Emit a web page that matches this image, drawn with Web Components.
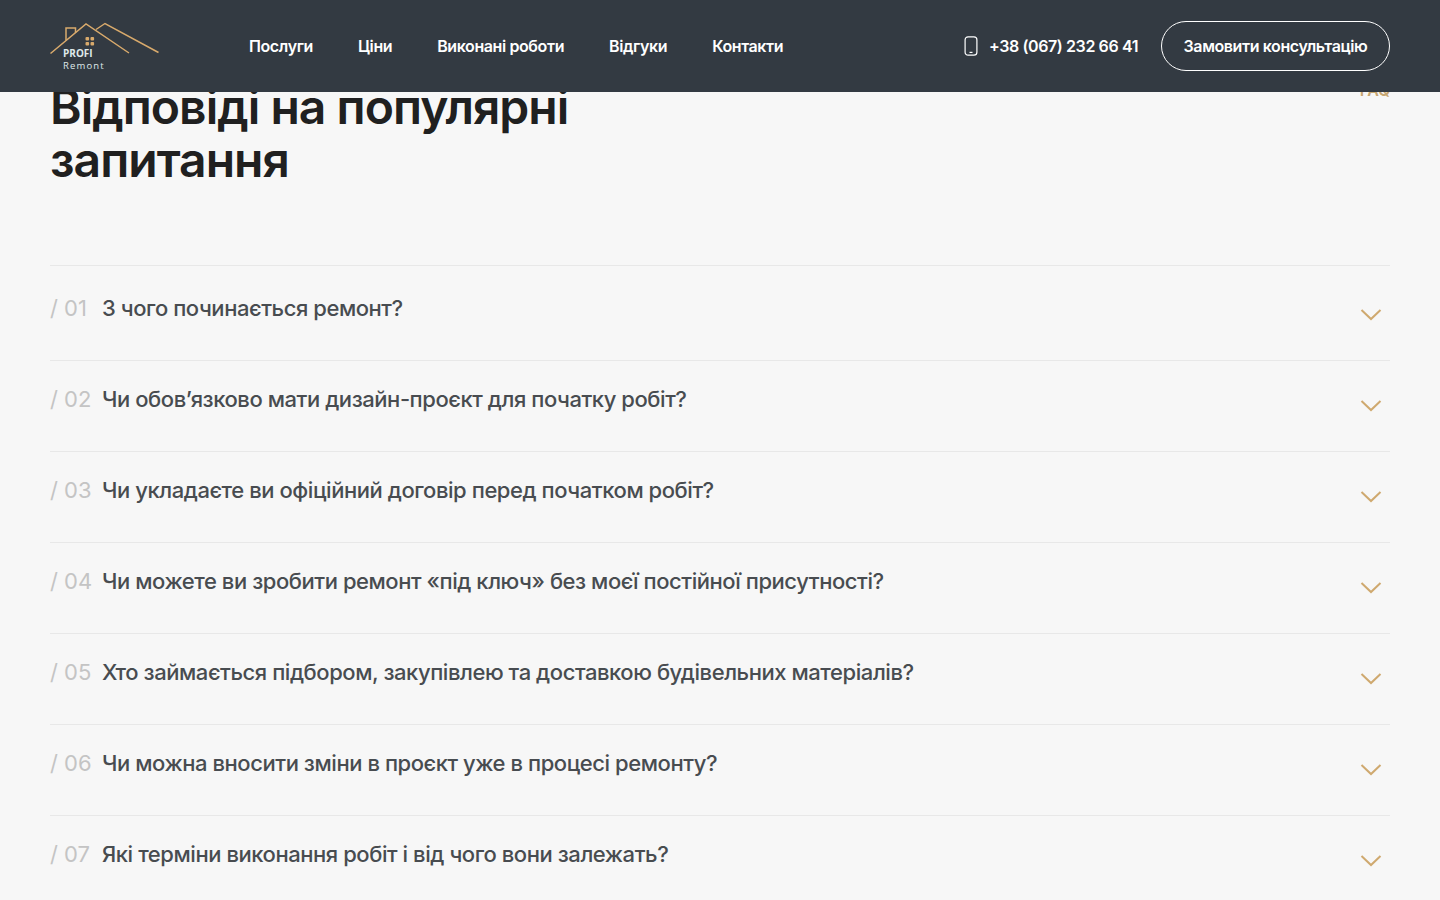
<!DOCTYPE html>
<html lang="uk">
<head>
<meta charset="utf-8">
<title>Profi Remont</title>
<style>
    html, body { margin: 0; height: 100%; overflow: hidden; background: #f7f7f7; }
    body { font-family: Inter, "Liberation Sans", sans-serif; }
</style>
</head>
<body>
<site-header></site-header>
<faq-section heading="Відповіді на популярні запитання" label="FAQ">
    <faq-item num="01" first>З чого починається ремонт?</faq-item>
    <faq-item num="02">Чи обов’язково мати дизайн-проєкт для початку робіт?</faq-item>
    <faq-item num="03">Чи укладаєте ви офіційний договір перед початком робіт?</faq-item>
    <faq-item num="04">Чи можете ви зробити ремонт «під ключ» без моєї постійної присутності?</faq-item>
    <faq-item num="05">Хто займається підбором, закупівлею та доставкою будівельних матеріалів?</faq-item>
    <faq-item num="06">Чи можна вносити зміни в проєкт уже в процесі ремонту?</faq-item>
    <faq-item num="07">Які терміни виконання робіт і від чого вони залежать?</faq-item>
</faq-section>

<script>
(() => {
    const HEADER = `
        <style>
            :host {
                position: fixed;
                top: 0; left: 0; right: 0;
                z-index: 10;
                display: flex;
                align-items: center;
                height: 92px;
                padding: 0 50px;
                background: #333a42;
                color: #fff;
                font-size: 16px;
                font-weight: 600;
                letter-spacing: -0.025em;
            }
            .logo { width: 110px; height: 50px; flex: none; position: relative; top: 1px; letter-spacing: 0; }
            .logo svg { display: block; position: absolute; top: 0; left: 0; }
            .logo b, .logo span { position: absolute; left: 13px; font-family: "Open Sans", sans-serif; color: #dfe8ea; line-height: 12px; }
            .logo b { top: 25px; font-size: 10px; font-weight: 700; }
            .logo span { top: 38px; font-size: 9.5px; font-weight: 400; letter-spacing: 0.12em; }
            nav { display: flex; gap: 45px; margin-left: 89px; }
            .right { margin-left: auto; display: flex; align-items: center; }
            .phone { display: flex; align-items: center; gap: 11px; margin-right: 23px; }
            .cta {
                box-sizing: border-box;
                height: 50px;
                width: 229px;
                display: flex;
                align-items: center;
                justify-content: center;
                border: 1px solid #fff;
                border-radius: 25px;
            }
        </style>
        <div class="logo">
            <svg width="110" height="36" viewBox="0 0 110 36" fill="none" stroke="#d9aa6c" stroke-width="1.5">
                <path d="M0.5 31.5 L36 2 L79 31"/>
                <path d="M46 7.5 L55 1.5 L108.5 30.5" transform="translate(0 0)"/>
                <path d="M16 18.5 V6 H25.5 V11"/>
                <g fill="#d9aa6c" stroke="none">
                    <rect x="35.5" y="15" width="3.6" height="3.6" rx="1"/>
                    <rect x="40.5" y="15" width="3.6" height="3.6" rx="1"/>
                    <rect x="35.5" y="20" width="3.6" height="3.6" rx="1"/>
                    <rect x="40.5" y="20" width="3.6" height="3.6" rx="1"/>
                </g>
            </svg>
            <b>PROFI</b>
            <span>Remont</span>
        </div>
        <nav>
            <span>Послуги</span>
            <span>Ціни</span>
            <span>Виконані роботи</span>
            <span>Відгуки</span>
            <span>Контакти</span>
        </nav>
        <div class="right">
            <div class="phone">
                <svg width="14" height="20" viewBox="0 0 14 20" fill="none" stroke="#fff" stroke-width="1.2">
                    <rect x="1.1" y="0.8" width="11.8" height="18.4" rx="3"/>
                    <path d="M5.5 16.4 H8.5"/>
                </svg>
                <span>+38 (067) 232 66 41</span>
            </div>
            <div class="cta">Замовити консультацію</div>
        </div>
    `

    const SECTION = `
        <style>
            :host {
                display: block;
                padding: 80px 50px 0;
            }
            .top {
                display: flex;
                justify-content: space-between;
                align-items: flex-start;
                margin-bottom: 79px;
            }
            h2 {
                margin: 0;
                width: 560px;
                font-size: 48px;
                line-height: 53px;
                font-weight: 600;
                letter-spacing: -0.02em;
                color: #202020;
            }
            .label {
                font-size: 16px;
                font-weight: 600;
                color: #c7a671;
                line-height: 20px;
                letter-spacing: -0.02em;
            }
            .list { border-top: 1px solid #e8e8e8; padding-top: 4px; }
        </style>
        <div class="top">
            <h2></h2>
            <div class="label"></div>
        </div>
        <div class="list"><slot></slot></div>
    `

    const ITEM = `
        <style>
            :host {
                box-sizing: border-box;
                display: flex;
                align-items: flex-start;
                height: 91px;
                padding-top: 24px;
                border-bottom: 1px solid #e8e8e8;
                font-size: 22px;
                line-height: 28px;
                font-weight: 500;
                letter-spacing: -0.02em;
                color: #484c50;
            }
            .num { width: 52px; flex: none; color: #c4c4c4; font-weight: 400; letter-spacing: 0; }
            .text { flex: 1; }
            svg { flex: none; margin: 14px 8px 0 0; }
        </style>
        <span class="num"></span>
        <span class="text"><slot></slot></span>
        <svg width="22" height="14" viewBox="0 0 22 14" fill="none" stroke="#cfa96f" stroke-width="2">
            <path d="M1.5 2 L11 11 L20.5 2"/>
        </svg>
    `

    const fromHtml = html => {
        let template = document.createElement("template")
        template.innerHTML = html
        return template.content.cloneNode(true)
    }

    customElements.define("site-header", class extends HTMLElement {
        constructor(){
            super()
            this.attachShadow({mode: 'open'}).appendChild(fromHtml(HEADER))
        }
    })

    customElements.define("faq-section", class extends HTMLElement {
        constructor(){
            super()
            this.attachShadow({mode: 'open'}).appendChild(fromHtml(SECTION))
        }
        connectedCallback(){
            this.shadowRoot.querySelector("h2").textContent = this.getAttribute("heading")
            this.shadowRoot.querySelector(".label").textContent = this.getAttribute("label")
        }
    })

    customElements.define("faq-item", class extends HTMLElement {
        constructor(){
            super()
            this.attachShadow({mode: 'open'}).appendChild(fromHtml(ITEM))
        }
        connectedCallback(){
            this.shadowRoot.querySelector(".num").textContent = "/ " + this.getAttribute("num")
        }
    })
})()
</script>
</body>
</html>
